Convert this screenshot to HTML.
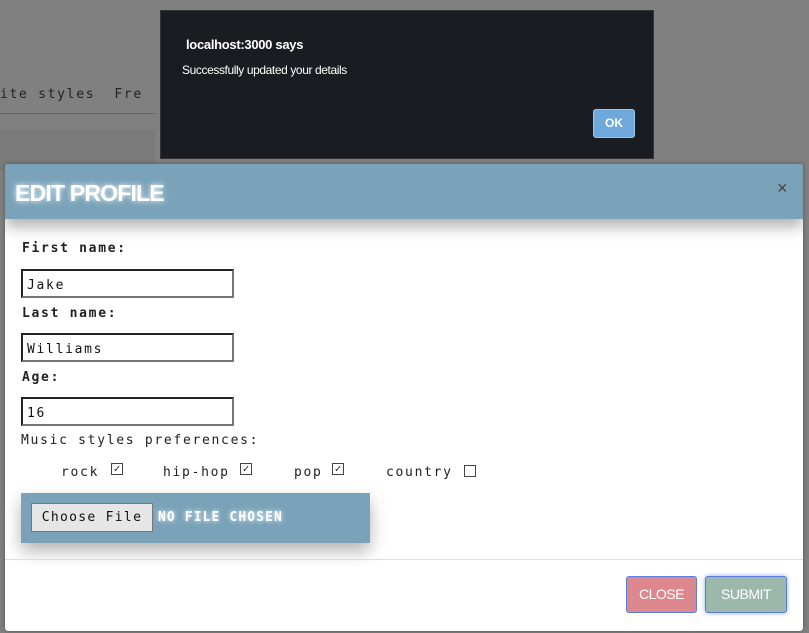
<!DOCTYPE html>
<html><head><style>
body{margin:0;width:809px;height:633px;background:#808080;position:relative;overflow:hidden;font-family:"DejaVu Sans Mono","Liberation Mono",monospace;}
.a{position:absolute}
.bg-text{left:0;top:87px;font-size:13px;color:#222;letter-spacing:1.7px;white-space:pre}
.alert{left:160px;top:10px;width:494px;height:149px;background:#191c21;border:1px solid #333;box-sizing:border-box;color:#fff;font-family:"Liberation Sans",sans-serif}
.modal{left:5px;top:164px;width:798px;height:467px;background:#fff;border-radius:3px;overflow:hidden;box-shadow:0 0 4px #555}
.hdr{left:0;top:0;width:798px;height:55px;background:#7aa3ba;box-shadow:0 8px 14px rgba(0,0,0,.3)}
.lab{font-size:13px;font-weight:bold;color:#222;left:17px;letter-spacing:1.7px}
.inp{left:16px;width:213px;height:29px;border:2px solid;border-color:#222 #777 #777 #222;box-sizing:border-box;font-size:13px;padding:7px 4px 5px;color:#111;letter-spacing:1.7px}
.t{font-size:13px;color:#222;letter-spacing:1.7px;white-space:pre}
.cb{width:10px;height:10px;border:1px solid #444;font-size:11px;line-height:10px;text-align:center;color:#222}
</style></head><body>
<div class="a bg-text">ite styles  Fre</div>
<div class="a" style="left:0;top:113px;width:155px;height:1px;background:#666"></div>
<div class="a" style="left:0;top:130px;width:155px;height:40px;background:#7a7a7a"></div>
<div class="a alert">
<div class="a" style="left:25px;top:26px;font-size:13px;font-weight:bold;letter-spacing:-0.3px">localhost:3000 says</div>
<div class="a" style="left:21px;top:52px;font-size:12px;letter-spacing:-0.4px">Successfully updated your details</div>
<div class="a" style="left:432px;top:98px;width:42px;height:29px;background:#6fa9dc;border:1px solid #9cc6ea;border-radius:3px;box-sizing:border-box;font-size:12px;font-weight:bold;text-align:center;line-height:27px">OK</div>
</div>
<div class="a modal">
<div class="a hdr">
<div class="a" style="left:10px;top:16px;font-family:'Liberation Sans',sans-serif;font-size:23px;font-weight:bold;color:#fff;text-shadow:0 0 6px #fff;letter-spacing:-0.8px">EDIT PROFILE</div>
<div class="a" style="left:772px;top:14px;font-family:'Liberation Sans',sans-serif;font-size:18px;color:#444">×</div>
</div>
<div class="a lab" style="top:77px">First name:</div>
<div class="a inp" style="top:105px">Jake</div>
<div class="a lab" style="top:142px">Last name:</div>
<div class="a inp" style="top:169px">Williams</div>
<div class="a lab" style="top:206px">Age:</div>
<div class="a inp" style="top:233px">16</div>
<div class="a t" style="left:16px;top:269px">Music styles preferences:</div>
<div class="a t" style="left:56px;top:301px">rock</div><div class="a cb" style="left:106px;top:299px">✓</div>
<div class="a t" style="left:158px;top:301px">hip-hop</div><div class="a cb" style="left:235px;top:299px">✓</div>
<div class="a t" style="left:289px;top:301px">pop</div><div class="a cb" style="left:327px;top:299px">✓</div>
<div class="a t" style="left:381px;top:301px">country</div><div class="a cb" style="left:459px;top:301px"></div>
<div class="a" style="left:16px;top:329px;width:349px;height:50px;background:#7aa3ba;box-shadow:0 8px 16px rgba(0,0,0,.3)">
<div class="a" style="left:10px;top:10px;width:122px;height:29px;background:#e6e6e6;border:1px solid #777;box-sizing:border-box;font-size:13px;text-align:center;line-height:27px;color:#111;letter-spacing:1.3px">Choose File</div>
<div class="a" style="left:137px;top:17px;font-size:13px;font-weight:bold;color:#fff;text-shadow:0 0 5px #fff;letter-spacing:1.1px">NO FILE CHOSEN</div>
</div>
<div class="a" style="left:0;top:395px;width:798px;height:1px;background:#ddd"></div>
<div class="a" style="left:621px;top:412px;width:71px;height:37px;background:#dd888e;border:1px solid #5a7de0;border-radius:3px;box-sizing:border-box;color:#fff;font-family:'Liberation Sans',sans-serif;font-size:14px;text-align:center;line-height:35px;letter-spacing:-0.5px">CLOSE</div>
<div class="a" style="left:700px;top:412px;width:82px;height:37px;background:#9bb8aa;border:1px solid #5a7de0;border-radius:3px;box-sizing:border-box;color:#fff;font-family:'Liberation Sans',sans-serif;font-size:14px;text-align:center;line-height:35px;box-shadow:0 0 5px #8aa8f0;letter-spacing:-0.5px">SUBMIT</div>
</div>
</body></html>
